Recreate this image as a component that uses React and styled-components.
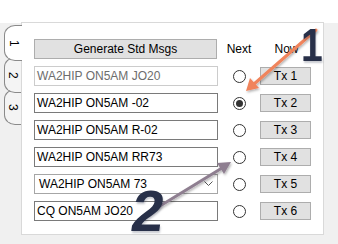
import React from "react";
import styled, { createGlobalStyle } from "styled-components";

const GlobalStyle = createGlobalStyle`
  html, body { margin: 0; padding: 0; background: #f0f0f0; }
  body {
    width: 338px;
    height: 244px;
    overflow: hidden;
    font-family: "Liberation Sans", Arial, sans-serif;
    font-size: 12px;
    color: #000;
  }
`;

const Screen = styled.div`
  position: relative;
  width: 338px;
  height: 244px;
  display: flex;
  flex-direction: column;
`;

const TopStrip = styled.div`
  height: 23px;
  background: #fff;
`;

const Body = styled.div`
  display: flex;
  align-items: flex-start;
`;

const TabStrip = styled.div`
  width: 21px;
  padding: 2px 0 0 4px;
  box-sizing: border-box;
  display: flex;
  flex-direction: column;
  position: relative;
  z-index: 2;
`;

const Tab = styled.div`
  position: relative;
  width: ${(p) => (p.$active ? 18 : 17)}px;
  height: 36px;
  margin-top: ${(p) => (p.$first ? 0 : -4)}px;
  box-sizing: border-box;
  border: 1px solid #8a8a8a;
  border-right: none;
  border-radius: 11px 0 0 11px / 10px 0 0 10px;
  background: ${(p) => (p.$active ? "#fff" : "#f4f4f4")};
  z-index: ${(p) => (p.$active ? 3 : p.$z)};
  writing-mode: vertical-rl;
  display: flex;
  align-items: center;
  justify-content: center;
  font-size: 12px;
  color: #000;
`;

const Panel = styled.div`
  width: 303px;
  height: 213px;
  box-sizing: border-box;
  margin-top: -1px;
  border: 1px solid #d9d9d9;
  background: #fff;
  padding: 16px 0 0 12px;
`;

const Grid = styled.div`
  display: grid;
  grid-template-columns: 184px 42px 51px;
  grid-auto-rows: 20px;
  row-gap: 7px;
  align-items: center;
`;

const GenerateButton = styled.div`
  height: 20px;
  box-sizing: border-box;
  margin-right: 1px;
  margin-bottom: 1px;
  border: 1px solid #adadad;
  background: #e1e1e1;
  display: flex;
  align-items: center;
  justify-content: center;
`;

const HeadLabel = styled.div`
  text-align: center;
  color: #000;
  padding-left: ${(p) => p.$shift || 0}px;
`;

const Field = styled.div`
  height: 20px;
  box-sizing: border-box;
  border: 1px solid ${(p) => (p.$disabled ? "#cccccc" : "#7a7a7a")};
  color: ${(p) => (p.$disabled ? "#6d6d6d" : "#000")};
  background: #fff;
  display: flex;
  align-items: center;
  padding-left: 2px;
  white-space: nowrap;
  overflow: hidden;
`;

const Combo = styled(Field)`
  border-color: #a6a6a6;
  padding-left: 4px;
  justify-content: space-between;
  padding-right: 4px;
`;

const Radio = styled.div`
  justify-self: center;
  width: 13px;
  height: 13px;
  box-sizing: border-box;
  border-radius: 50%;
  border: 1px solid #333;
  background: #fff;
  display: flex;
  align-items: center;
  justify-content: center;
  &::after {
    content: "";
    width: 7px;
    height: 7px;
    border-radius: 50%;
    background: ${(p) => (p.$checked ? "#333" : "transparent")};
  }
`;

const TxButton = styled.div`
  height: 18px;
  box-sizing: border-box;
  border: 1px solid #adadad;
  background: #e1e1e1;
  display: flex;
  align-items: center;
  justify-content: center;
`;

const Overlay = styled.svg`
  position: absolute;
  left: 0;
  top: 0;
  pointer-events: none;
  z-index: 5;
`;

const Numeral = styled.span`
  position: absolute;
  z-index: 6;
  left: ${(p) => p.$x}px;
  top: ${(p) => p.$y}px;
  font-family: "Liberation Sans", Arial, sans-serif;
  font-weight: bold;
  font-size: ${(p) => p.$size}px;
  line-height: 1;
  color: #283049;
  transform: ${(p) => p.$transform || "none"};
  text-shadow: 1px 2px 2px rgba(40, 48, 73, 0.25);
`;

const rows = [
  { text: "WA2HIP ON5AM JO20", disabled: true, tx: "Tx 1" },
  { text: "WA2HIP ON5AM -02", checked: true, tx: "Tx 2" },
  { text: "WA2HIP ON5AM R-02", tx: "Tx 3" },
  { text: "WA2HIP ON5AM RR73", tx: "Tx 4" },
  { text: "WA2HIP ON5AM 73", combo: true, tx: "Tx 5" },
  { text: "CQ ON5AM JO20", tx: "Tx 6" },
];

function Chevron() {
  return (
    <svg width="9" height="6" viewBox="0 0 9 6">
      <path d="M0.5 0.5 L4.5 4.5 L8.5 0.5" fill="none" stroke="#555" strokeWidth="1" />
    </svg>
  );
}

export default function App() {
  return (
    <Screen>
      <GlobalStyle />
      <TopStrip />
      <Body>
        <TabStrip>
          <Tab $first $active>1</Tab>
          <Tab $z={2}>2</Tab>
          <Tab $z={1}>3</Tab>
        </TabStrip>
        <Panel>
          <Grid>
            <GenerateButton>Generate Std Msgs</GenerateButton>
            <HeadLabel>Next</HeadLabel>
            <HeadLabel $shift={2}>Now</HeadLabel>
            {rows.map((r) => (
              <React.Fragment key={r.tx}>
                {r.combo ? (
                  <Combo>
                    <span>{r.text}</span>
                    <Chevron />
                  </Combo>
                ) : (
                  <Field $disabled={r.disabled}>{r.text}</Field>
                )}
                <Radio $checked={r.checked} />
                <TxButton>{r.tx}</TxButton>
              </React.Fragment>
            ))}
          </Grid>
        </Panel>
      </Body>

      <Overlay width="338" height="244" viewBox="0 0 338 244">
        <defs>
          <filter id="sh" x="-20%" y="-20%" width="140%" height="140%">
            <feDropShadow dx="1" dy="1.5" stdDeviation="1" floodColor="#000" floodOpacity="0.3" />
          </filter>
        </defs>
        <g filter="url(#sh)">
          <line x1="316" y1="30" x2="254" y2="84" stroke="#f0845c" strokeWidth="3" strokeLinecap="round" />
          <polygon points="246,91 250,78 259,88" fill="#f0845c" />
        </g>
        <g filter="url(#sh)">
          <line x1="142" y1="217" x2="222" y2="168" stroke="#8e7e90" strokeWidth="3" strokeLinecap="round" />
          <polygon points="231,162 217,163 224,174" fill="#8e7e90" />
        </g>
      </Overlay>
      <Numeral $x={299} $y={22} $size={46} $transform="scaleX(0.85)">1</Numeral>
      <Numeral $x={132} $y={182} $size={58} $transform="skewX(-8deg)">2</Numeral>
    </Screen>
  );
}
